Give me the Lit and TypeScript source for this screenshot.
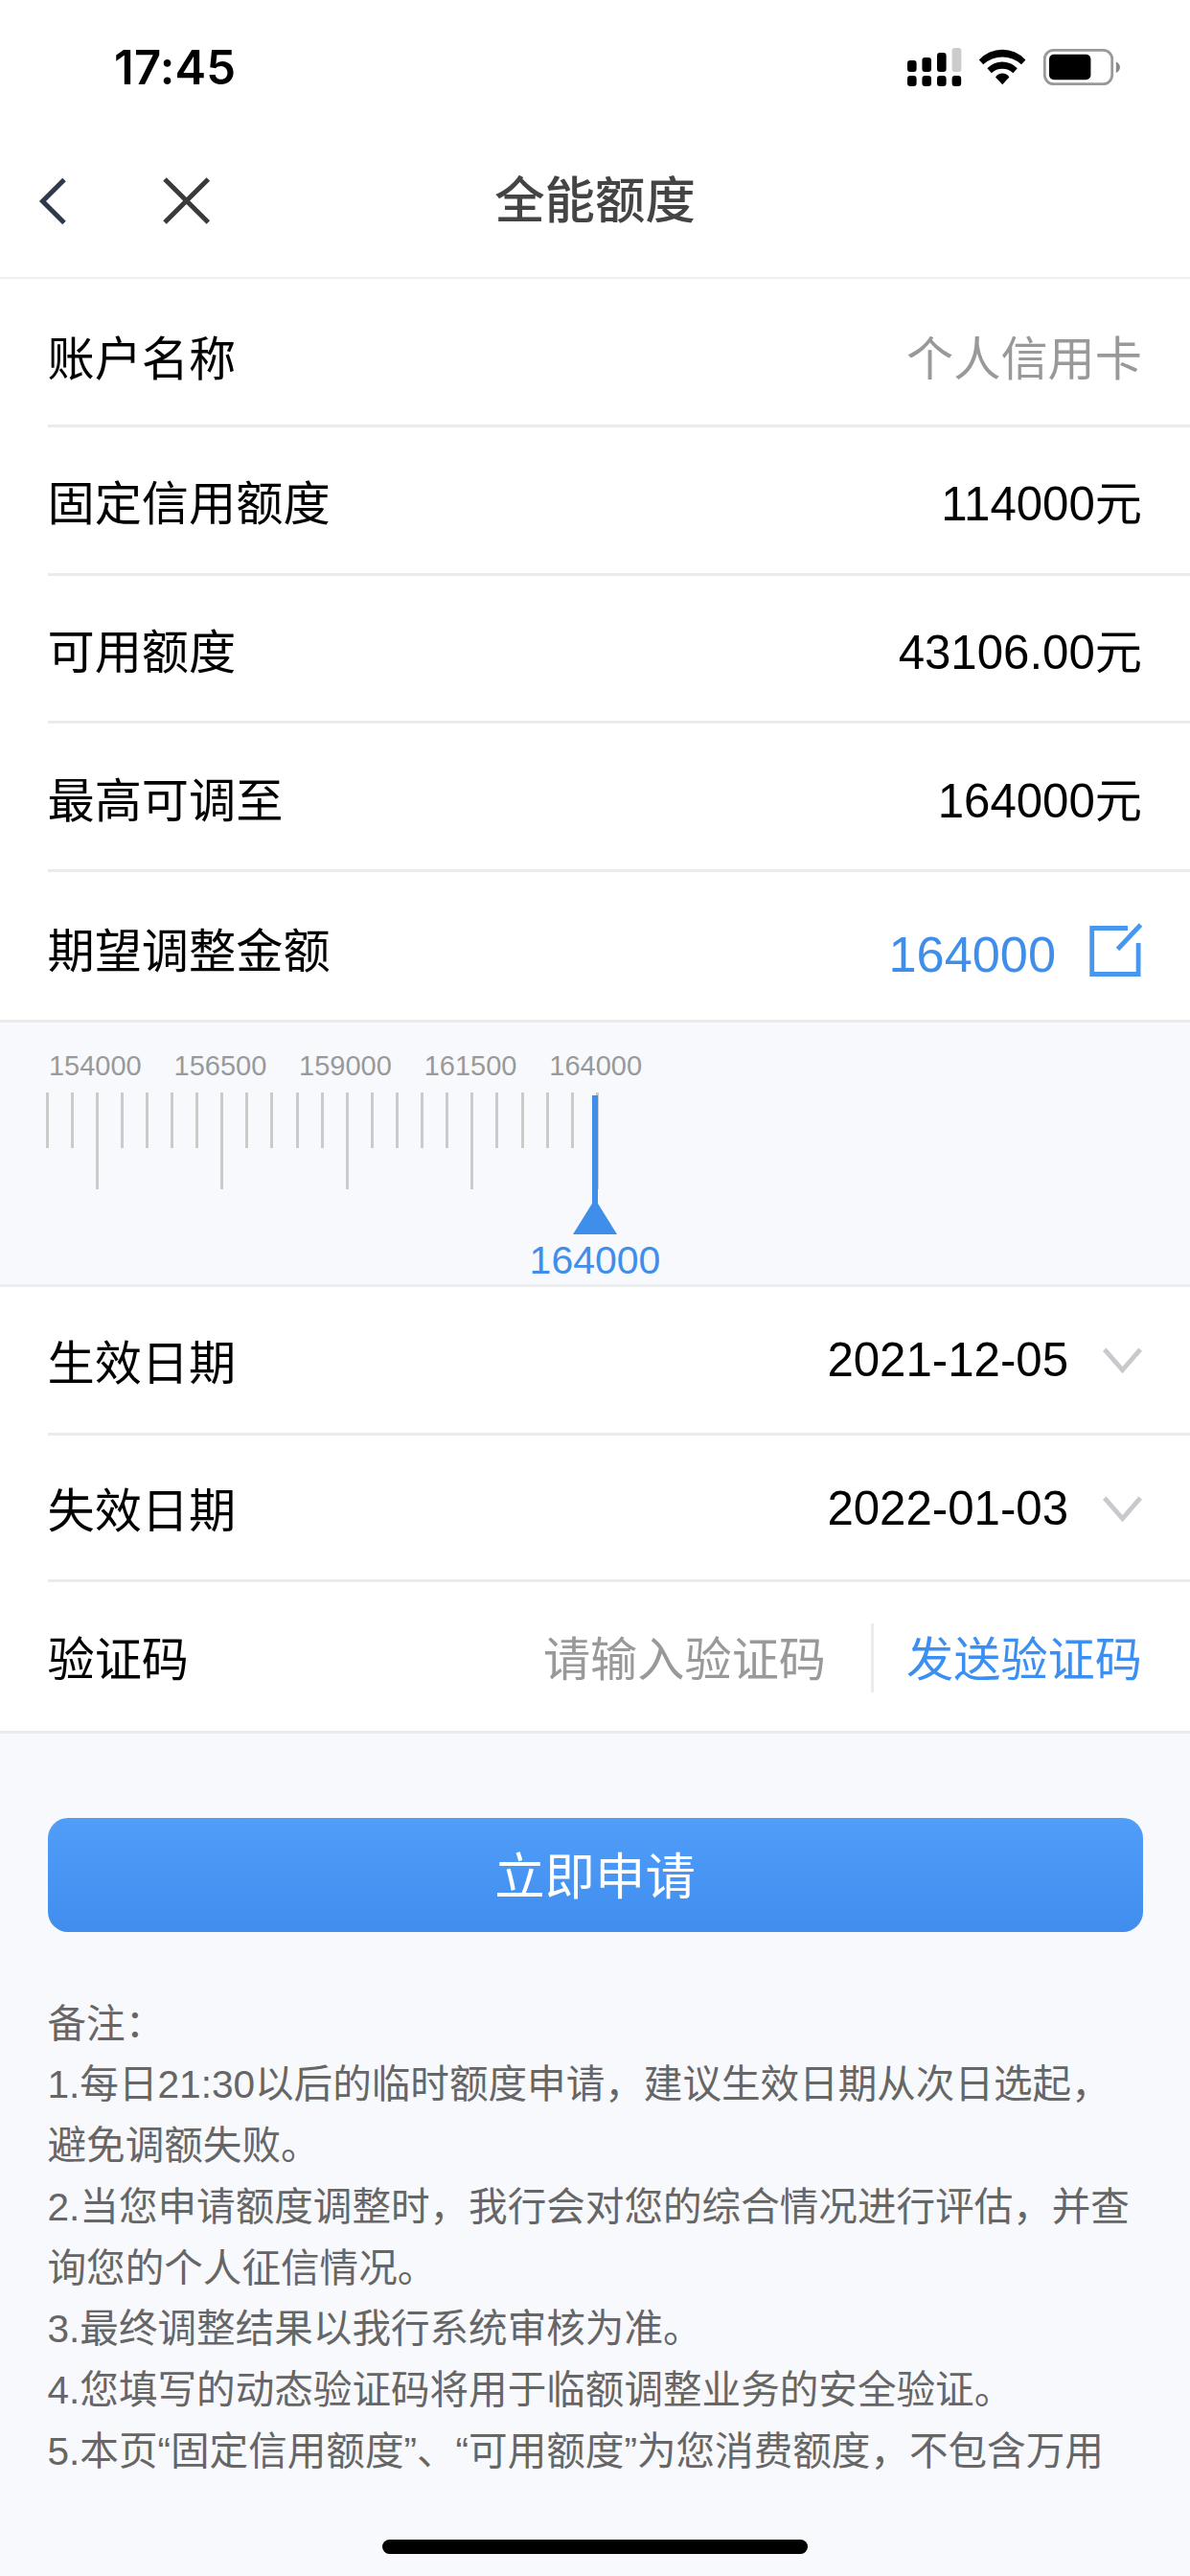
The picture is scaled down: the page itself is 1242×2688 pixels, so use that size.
import { LitElement, html, css, svg } from "lit";
import { customElement } from "lit/decorators.js";

const RULER_LABELS = ["154000", "156500", "159000", "161500", "164000"];
const TICKS = Array.from({ length: 23 }, (_, i) => i);
const NOTES = [
  "备注：",
  "1.每日21:30以后的临时额度申请，建议生效日期从次日选起，",
  "避免调额失败。",
  "2.当您申请额度调整时，我行会对您的综合情况进行评估，并查",
  "询您的个人征信情况。",
  "3.最终调整结果以我行系统审核为准。",
  "4.您填写的动态验证码将用于临额调整业务的安全验证。",
  "5.本页“固定信用额度”、“可用额度”为您消费额度，不包含万用",
];

@customElement("status-bar")
export class StatusBar extends LitElement {
  static styles = css`
    :host { display: flex; height: 130px; justify-content: space-between; box-sizing: border-box; padding: 40px 73px 0 119px; }
    .time { padding-top: 1px; font: 600 49px/60px Inter, "Liberation Sans", sans-serif; letter-spacing: 0.2px; color: #000; }
    .icons { display: flex; align-items: flex-start; padding-top: 8px; }
    svg { display: block; }
  `;
  render() {
    return html`
      <div class="time">17:45</div>
      <div class="icons">
        <svg width="224" height="44" viewBox="945 48 224 44">
          <g fill="#000">
            <rect x="947" y="63" width="9.6" height="12" rx="3" />
            <rect x="962.4" y="60" width="9.6" height="15" rx="3" />
            <rect x="978" y="55" width="9.6" height="20" rx="3" />
            <rect x="993.6" y="50" width="9.8" height="25" rx="3" fill="#ccc" />
            ${[947, 962.4, 978, 993.6].map((x) => svg`<rect x=${x} y="79" width="9.6" height="11" rx="3.2" />`)}
          </g>
          <path d="M1021.8 62.4 A33 33 0 0 1 1070.4 62.4 L1066 67.3 A29.3 29.3 0 0 0 1026.2 67.3 Z" />
          <path d="M1030.4 71.2 A21.6 21.6 0 0 1 1061.8 71.2 L1057.3 76.3 A16.2 16.2 0 0 0 1034.9 76.3 Z" />
          <path d="M1039 80.4 A8.6 8.6 0 0 1 1053.4 80.4 L1046.2 88.2 Z" />
          <rect x="1090.3" y="52.3" width="70.4" height="35.4" rx="9.5" fill="none" stroke="#999" stroke-width="2.8" />
          <rect x="1095" y="56.8" width="43.4" height="26.4" rx="5" />
          <path d="M1164.8 64.4 C1170.3 66.6 1170.3 73.8 1164.8 76 Z" fill="#888" />
        </svg>
      </div>
    `;
  }
}

@customElement("amount-ruler")
export class AmountRuler extends LitElement {
  static styles = css`
    :host { display: block; position: relative; height: 276px; box-sizing: border-box; background: #f8f9fd; border-bottom: 3px solid #ebedee; font-family: "Liberation Sans", sans-serif; }
    .labels { display: flex; padding: 27px 0 0 34px; }
    .labels span { width: 130.6px; text-align: center; font-size: 29px; line-height: 36px; color: #999; }
    .ticks { display: flex; padding: 10px 0 0 47.5px; }
    .tick { width: 26.12px; height: 58px; }
    .tick::before { content: ""; display: block; width: 3px; height: 100%; background: #cbcbcb; }
    .tall { height: 101px; }
    .pointer { position: absolute; left: 552px; top: 76px; width: 138px; display: flex; flex-direction: column; align-items: center; }
    .pointer span { font-size: 41px; line-height: 48px; margin-top: 3px; color: #3f8eea; }
    .pointer svg { display: block; }
  `;
  render() {
    return html`
      <div class="labels">${RULER_LABELS.map((l) => html`<span>${l}</span>`)}</div>
      <div class="ticks">
        ${TICKS.map((i) => html`<div class="tick ${i % 5 === 2 ? "tall" : ""}"></div>`)}
      </div>
      <div class="pointer">
        <svg width="46" height="145" viewBox="0 0 46 145" fill="#3f8eea">
          <rect x="20" y="0" width="6" height="120" />
          <path d="M23 108 L46 145 H0 Z" />
        </svg>
        <span>164000</span>
      </div>
    `;
  }
}

@customElement("app-root")
export class AppRoot extends LitElement {
  static styles = css`
    :host {
      display: flex; flex-direction: column; position: relative; width: 1242px; height: 2688px; overflow: hidden;
      background: #f8f9fd; color: #000;
      font-family: "Liberation Sans", "Noto Sans CJK SC", sans-serif;
      text-spacing-trim: space-all;
    }
    .head { background: #fff; }
    .nav { display: grid; grid-template-columns: 1fr auto 1fr; align-items: center; height: 161px; box-sizing: border-box; border-bottom: 2px solid #f0f0f0; }
    .nav svg { display: block; margin-left: 40px; }
    .title { font-size: 52.4px; line-height: 60px; padding-bottom: 9px; font-weight: 500; color: #444; font-family: "Noto Sans CJK SC", sans-serif; }
    .card { background: #fff; }
    .row { display: flex; align-items: flex-start; justify-content: space-between; height: 155px; box-sizing: border-box; padding: 50px 50px 0 0; margin-left: 49.5px; border-bottom: 3px solid #ebebeb; font-size: 49.2px; line-height: 60px; white-space: nowrap; }
    .name { padding-top: 54px; }
    .avail { height: 154px; }
    .max { padding-top: 51px; }
    .wish { height: 157px; padding-top: 53px; }
    .end { height: 153px; padding-top: 49px; }
    .end .right { padding-top: 1px; }
    .code { height: 158px; padding-top: 51px; }
    .full { margin-left: 0; padding-left: 49.5px; }
    .right { display: flex; align-items: flex-start; }
    .muted { color: #999; }
    .blue { color: #3f8eea; }
    .link { color: #3b8ff3; }
    .big { font-size: 52.3px; padding-top: 3px; margin-right: 35px; }
    .date { margin-top: -4px; margin-right: 36px; }
    .divider { width: 3px; height: 72px; margin: -8px 34px 0 47px; background: #ebebeb; }
    svg { display: block; }
    .chev { margin-top: 12px; }
    .foot { padding: 88px 49.5px 0; }
    .apply { display: block; width: 100%; height: 119px; box-sizing: border-box; border: 0; border-radius: 21px; padding: 5px 0 0; background: linear-gradient(#509ef9, #408dee); color: #fff; font-family: inherit; font-size: 52.4px; line-height: 60px; text-align: center; }
    .notes { margin-top: 64.5px; font-size: 40.6px; line-height: 63.8px; color: #666; white-space: nowrap; }
    .home { position: absolute; left: 399px; bottom: 23px; width: 444px; height: 15px; border-radius: 8px; background: #000; }
  `;

  private chevron() {
    return html`<svg class="chev" width="41" height="30" viewBox="0 0 41 30" fill="none" stroke="#c8c8cd" stroke-width="4.8">
      <path d="M1.8 3.2 L20.5 24.6 L39.2 3.2" />
    </svg>`;
  }

  render() {
    return html`
      <div class="head">
        <status-bar></status-bar>
        <div class="nav">
          <svg width="182" height="52" viewBox="40 184 182 52" fill="none" stroke-width="5">
            <path d="M67 187.5 L44.5 210 L67 232.5" stroke="#2f394c" />
            <path d="M172 187 L217.3 232 M217.3 187 L172 232" stroke="#3a3a3a" />
          </svg>
          <div class="title">全能额度</div>
          <div></div>
        </div>
      </div>
      <div class="card">
        <div class="row name"><span>账户名称</span><span class="muted">个人信用卡</span></div>
        <div class="row"><span>固定信用额度</span><span>114000元</span></div>
        <div class="row avail"><span>可用额度</span><span>43106.00元</span></div>
        <div class="row max"><span>最高可调至</span><span>164000元</span></div>
        <div class="row wish full">
          <span>期望调整金额</span>
          <div class="right">
            <span class="blue big">164000</span>
            <svg width="55" height="57" viewBox="1137.5 963 55 57" fill="none" stroke="#4797ee" stroke-width="4.8">
              <path d="M1177.5 968.5 H1140.2 V1016.5 H1188.6 V984" />
              <path d="M1167 990.5 L1191 965" />
            </svg>
          </div>
        </div>
      </div>
      <amount-ruler></amount-ruler>
      <div class="card">
        <div class="row"><span>生效日期</span><div class="right"><span class="date">2021-12-05</span>${this.chevron()}</div></div>
        <div class="row end"><span>失效日期</span><div class="right"><span class="date">2022-01-03</span>${this.chevron()}</div></div>
        <div class="row code full">
          <span>验证码</span>
          <div class="right">
            <span class="muted">请输入验证码</span>
            <div class="divider"></div>
            <span class="link">发送验证码</span>
          </div>
        </div>
      </div>
      <div class="foot">
        <button class="apply">立即申请</button>
        <div class="notes">${NOTES.map((n) => html`<div>${n}</div>`)}</div>
      </div>
      <div class="home"></div>
    `;
  }
}
